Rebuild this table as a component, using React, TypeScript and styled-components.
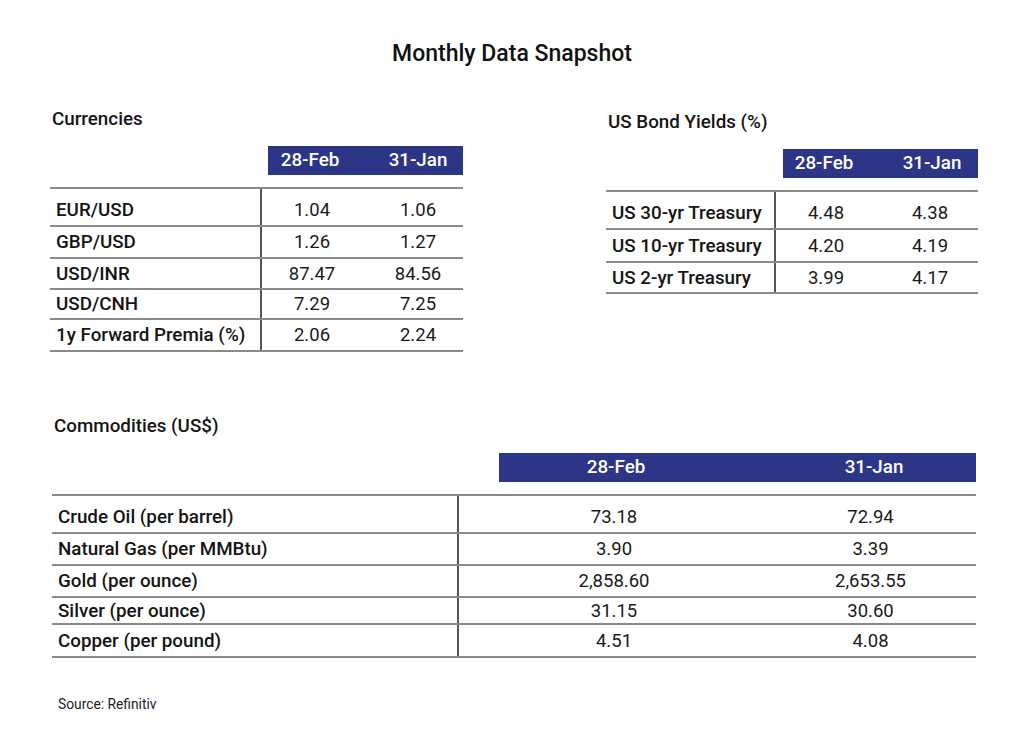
import React from "react";
import styled, { createGlobalStyle } from "styled-components";

const Global = createGlobalStyle`
  html, body { margin: 0; padding: 0; background: #ffffff; }
  body { font-family: Roboto, "Liberation Sans", Arial, sans-serif; color: #1a1a1a; }
  * { box-sizing: border-box; }
`;

const Page = styled.div`
  width: 1024px;
  height: 748px;
  background: #ffffff;
  display: flex;
  flex-direction: column;
`;

const Title = styled.h1`
  margin: 41px 0 0 0;
  height: 26px;
  line-height: 26px;
  font-size: 23px;
  font-weight: 500;
  text-align: center;
  color: #111;
`;

const TopRow = styled.div`
  display: flex;
  margin-top: 41px;
  padding-left: 50px;
  gap: 143px;
  align-items: flex-start;
`;

const Section = styled.section<{ $width: number; $offset?: number }>`
  width: ${(p) => p.$width}px;
  margin-top: ${(p) => p.$offset ?? 0}px;
  display: flex;
  flex-direction: column;
`;

const SectionLabel = styled.h2`
  margin: 0;
  padding-left: 2px;
  height: 22px;
  line-height: 22px;
  font-size: 18.8px;
  font-weight: 500;
  color: #141414;
`;

const HeaderBand = styled.div<{ $left: number; $cols: string; $gap: number }>`
  margin-top: 16px;
  margin-left: ${(p) => p.$left}px;
  height: 29px;
  background: #2d3587;
  display: grid;
  grid-template-columns: ${(p) => p.$cols};
  column-gap: ${(p) => p.$gap}px;
  align-items: center;
`;

const BandCell = styled.div`
  color: #ffffff;
  font-size: 18.8px;
  font-weight: 500;
  text-align: center;
  line-height: 29px;
  white-space: nowrap;
`;

const Table = styled.div`
  margin-top: 12px;
  border-top: 2px solid #8a8a8a;
  display: flex;
  flex-direction: column;
`;

const Row = styled.div<{ $h: number; $cols: string }>`
  height: ${(p) => p.$h}px;
  display: grid;
  grid-template-columns: ${(p) => p.$cols};
  border-bottom: 2px solid #8a8a8a;
`;

const LabelCell = styled.div<{ $first?: boolean }>`
  display: flex;
  align-items: center;
  padding-left: 6px;
  padding-top: ${(p) => (p.$first ? 6 : 0)}px;
  font-size: 18.8px;
  font-weight: 500;
  color: #141414;
  white-space: nowrap;
`;

const ValueCell = styled.div<{ $first?: boolean; $divider?: boolean; $shift?: number }>`
  display: flex;
  align-items: center;
  justify-content: center;
  padding-top: ${(p) => (p.$first ? 6 : 0)}px;
  padding-left: ${(p) => Math.max(0, p.$shift ?? 0)}px;
  padding-right: ${(p) => Math.max(0, -(p.$shift ?? 0))}px;
  border-left: ${(p) => (p.$divider ? "2px solid #555" : "none")};
  font-size: 18.5px;
  font-weight: 400;
  color: #1a1a1a;
  white-space: nowrap;
`;

const Source = styled.p`
  margin: 38px 0 0 58px;
  font-size: 13.8px;
  line-height: 16px;
  color: #222;
`;

const BottomBlock = styled.div`
  margin-top: 63px;
  padding-left: 52px;
`;

type DataRow = { label: string; a: string; b: string; h: number };

type TableProps = {
  title: string;
  width: number;
  cols: string;
  bandLeft: number;
  bandCols: string;
  bandGap: number;
  shift: number;
  rows: DataRow[];
  offset?: number;
};

function DataTable({ title, width, cols, bandLeft, bandCols, bandGap, shift, rows, offset }: TableProps) {
  return (
    <Section $width={width} $offset={offset}>
      <SectionLabel>{title}</SectionLabel>
      <HeaderBand $left={bandLeft} $cols={bandCols} $gap={bandGap}>
        <BandCell>28-Feb</BandCell>
        <BandCell>31-Jan</BandCell>
      </HeaderBand>
      <Table>
        {rows.map((r, i) => (
          <Row key={r.label} $h={r.h} $cols={cols}>
            <LabelCell $first={i === 0}>{r.label}</LabelCell>
            <ValueCell $first={i === 0} $divider>
              {r.a}
            </ValueCell>
            <ValueCell $first={i === 0} $shift={shift}>
              {r.b}
            </ValueCell>
          </Row>
        ))}
      </Table>
    </Section>
  );
}

const currencies: DataRow[] = [
  { label: "EUR/USD", a: "1.04", b: "1.06", h: 38 },
  { label: "GBP/USD", a: "1.26", b: "1.27", h: 32 },
  { label: "USD/INR", a: "87.47", b: "84.56", h: 31 },
  { label: "USD/CNH", a: "7.29", b: "7.25", h: 30 },
  { label: "1y Forward Premia (%)", a: "2.06", b: "2.24", h: 32 },
];

const bonds: DataRow[] = [
  { label: "US 30-yr Treasury", a: "4.48", b: "4.38", h: 38 },
  { label: "US 10-yr Treasury", a: "4.20", b: "4.19", h: 33 },
  { label: "US 2-yr Treasury", a: "3.99", b: "4.17", h: 31 },
];

const commodities: DataRow[] = [
  { label: "Crude Oil (per barrel)", a: "73.18", b: "72.94", h: 38 },
  { label: "Natural Gas (per MMBtu)", a: "3.90", b: "3.39", h: 32 },
  { label: "Gold (per ounce)", a: "2,858.60", b: "2,653.55", h: 32 },
  { label: "Silver (per ounce)", a: "31.15", b: "30.60", h: 27 },
  { label: "Copper (per pound)", a: "4.51", b: "4.08", h: 33 },
];

export default function App() {
  return (
    <>
      <Global />
      <Page>
        <Title>Monthly Data Snapshot</Title>
        <TopRow>
          <DataTable
            title="Currencies"
            width={413}
            cols="210px 102px 1fr"
            bandLeft={218}
            bandCols="84px 88px"
            bandGap={22}
            shift={11}
            rows={currencies}
          />
          <DataTable
            title="US Bond Yields (%)"
            width={372}
            cols="168px 102px 1fr"
            bandLeft={177}
            bandCols="82px 90px"
            bandGap={22}
            shift={6}
            rows={bonds}
            offset={3}
          />
        </TopRow>
        <BottomBlock>
          <DataTable
            title="Commodities (US$)"
            width={924}
            cols="405px 312px 1fr"
            bandLeft={447}
            bandCols="234px 202px"
            bandGap={40}
            shift={-4}
            rows={commodities}
          />
        </BottomBlock>
        <Source>Source: Refinitiv</Source>
      </Page>
    </>
  );
}
